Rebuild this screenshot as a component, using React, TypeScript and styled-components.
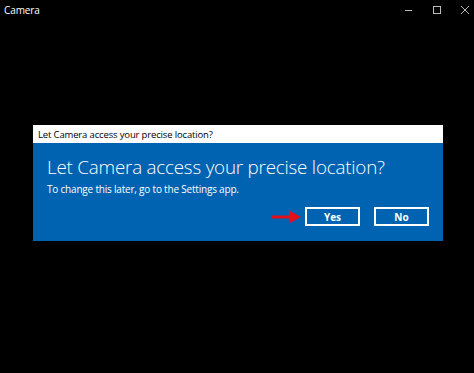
import styled, { createGlobalStyle } from "styled-components";

const GlobalStyle = createGlobalStyle`
  html, body {
    margin: 0;
    padding: 0;
    background: #000;
  }
  body {
    font-family: "Open Sans", "Noto Sans", sans-serif;
  }
`;

const Window = styled.div`
  width: 474px;
  height: 373px;
  background: #000;
  display: flex;
  flex-direction: column;
`;

const TitleBar = styled.div`
  height: 19px;
  display: flex;
  align-items: center;
  justify-content: space-between;
  color: #fff;
`;

const AppName = styled.span`
  font-size: 10px;
  padding-left: 4px;
  letter-spacing: -0.1px;
`;

const Controls = styled.div`
  display: flex;
  align-items: center;
  gap: 18px;
  padding-right: 4px;
  height: 100%;
`;

const ControlButton = styled.div`
  width: 10px;
  height: 19px;
  display: flex;
  align-items: center;
  justify-content: center;
`;

const Stage = styled.div`
  flex: 1;
  padding: 106px 0 0 33px;
`;

const Dialog = styled.div`
  width: 410px;
  display: flex;
  flex-direction: column;
`;

const DialogHeader = styled.div`
  height: 18px;
  background: #fff;
  color: #000;
  font-size: 9.5px;
  display: flex;
  align-items: center;
  padding-left: 5px;
  letter-spacing: -0.15px;
`;

const DialogBody = styled.div`
  background: #0063b1;
  padding: 11px 14px 15px 14px;
  display: flex;
  flex-direction: column;
  color: #fff;
`;

const Heading = styled.h1`
  margin: 0;
  font-weight: 300;
  font-size: 18.8px;
  line-height: 26px;
  letter-spacing: -0.2px;
`;

const SubText = styled.p`
  margin: 2px 0 0;
  font-size: 10px;
  line-height: 14px;
  letter-spacing: -0.2px;
`;

const Actions = styled.div`
  display: flex;
  justify-content: flex-end;
  align-items: center;
  gap: 14px;
  margin-top: 11px;
  position: relative;
`;

const ActionButton = styled.button`
  width: 55px;
  height: 19px;
  box-sizing: border-box;
  border: 2px solid #fff;
  background: #0063b1;
  color: #fff;
  font-family: "Open Sans", "Noto Sans", sans-serif;
  font-weight: 700;
  font-size: 10px;
  padding: 0;
  display: flex;
  align-items: center;
  justify-content: center;
`;

const Arrow = styled.svg`
  position: absolute;
  left: 225px;
  top: 3px;
`;

export default function App() {
  return (
    <Window>
      <GlobalStyle />
      <TitleBar>
        <AppName>Camera</AppName>
        <Controls>
          <ControlButton>
            <svg width="10" height="10" viewBox="0 0 10 10">
              <line x1="1" y1="5.5" x2="8" y2="5.5" stroke="#bbb" strokeWidth="1" />
            </svg>
          </ControlButton>
          <ControlButton>
            <svg width="10" height="10" viewBox="0 0 10 10">
              <rect x="1.5" y="1.5" width="7" height="7" fill="none" stroke="#bbb" strokeWidth="1" />
            </svg>
          </ControlButton>
          <ControlButton>
            <svg width="10" height="10" viewBox="0 0 10 10">
              <path d="M1 1 L9 9 M9 1 L1 9" stroke="#bbb" strokeWidth="1" />
            </svg>
          </ControlButton>
        </Controls>
      </TitleBar>
      <Stage>
        <Dialog>
          <DialogHeader>Let Camera access your precise location?</DialogHeader>
          <DialogBody>
            <Heading>Let Camera access your precise location?</Heading>
            <SubText>To change this later, go to the Settings app.</SubText>
            <Actions>
              <Arrow width="30" height="14" viewBox="0 0 30 14">
                <path d="M0 5.5 H18 V1 L29 7 L18 13 V8.5 H0 Z" fill="#e3101b" />
              </Arrow>
              <ActionButton>Yes</ActionButton>
              <ActionButton>No</ActionButton>
            </Actions>
          </DialogBody>
        </Dialog>
      </Stage>
    </Window>
  );
}
